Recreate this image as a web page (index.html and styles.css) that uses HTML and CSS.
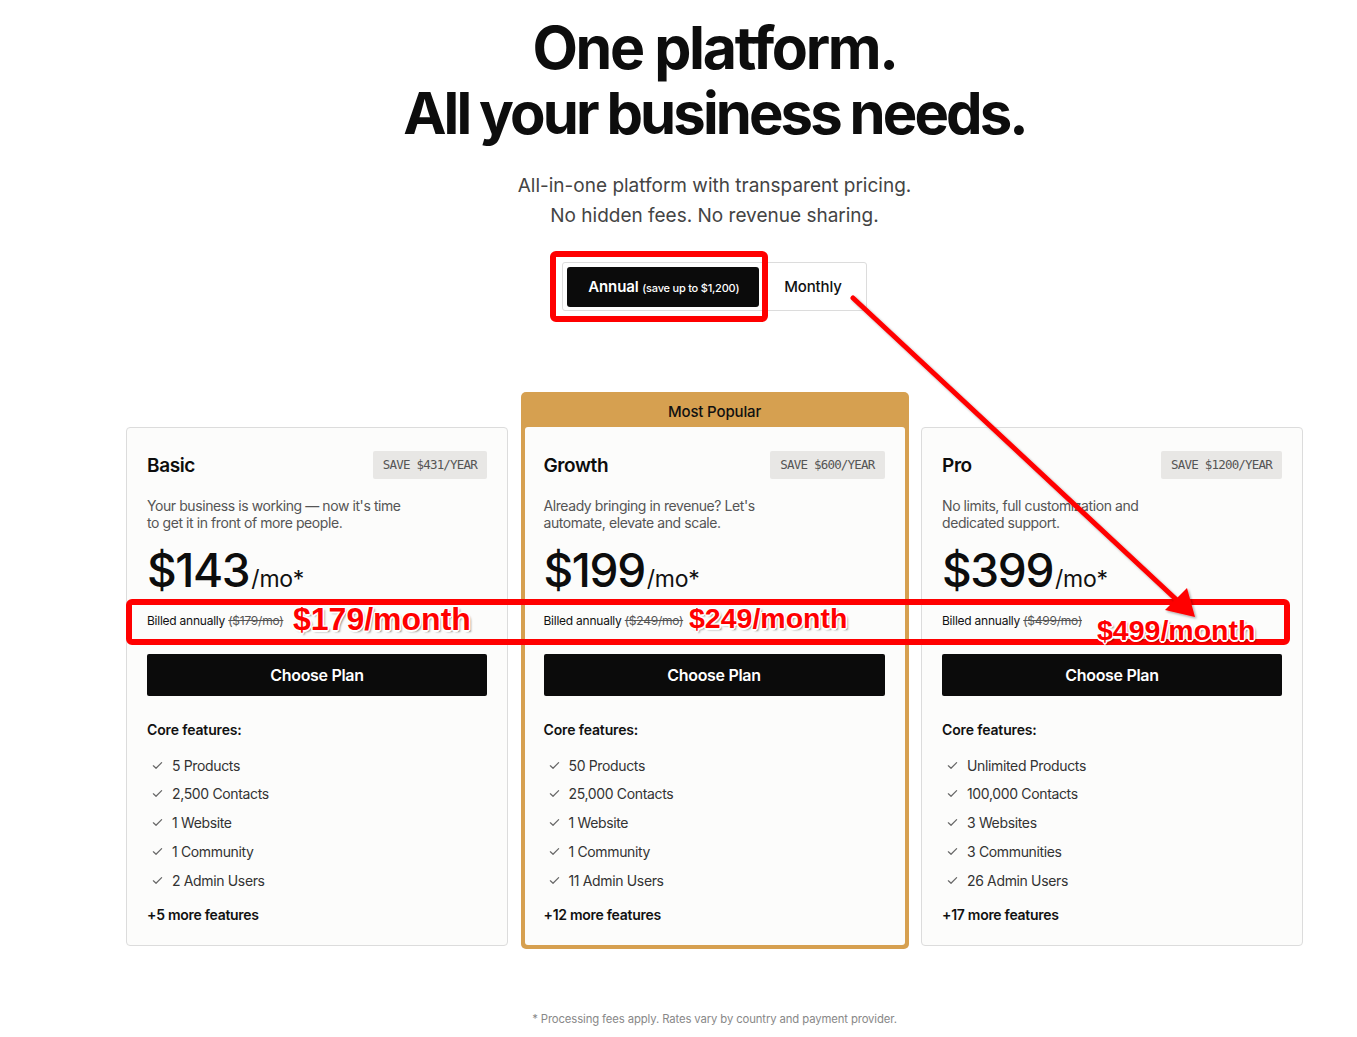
FILE: index.html
```html
<!DOCTYPE html>
<html lang="en">
<head>
<meta charset="utf-8">
<title>Pricing</title>
<link rel="stylesheet" href="styles.css">
</head>
<body>
<div class="page">
  <main class="content">
    <header class="hero">
      <h1 class="hero-title"><span class="line1">One platform.</span><br><span class="line2">All your business needs.</span></h1>
      <p class="hero-sub">All-in-one platform with transparent pricing.<br>No hidden fees. No revenue sharing.</p>
      <div class="toggle">
        <button class="toggle-btn active"><span class="t-main">Annual</span> <span class="t-small">(save up to $1,200)</span></button>
        <button class="toggle-btn">Monthly</button>
      </div>
    </header>

    <section class="plans">
      <article class="card">
        <div class="card-head">
          <h2 class="plan-name">Basic</h2>
          <span class="save">SAVE $431/YEAR</span>
        </div>
        <p class="plan-desc">Your business is working — now it's time to get it in front of more people.</p>
        <div class="price"><span class="amount">$143</span><span class="per">/mo*</span></div>
        <p class="billed">Billed annually <s>($179/mo)</s></p>
        <button class="choose">Choose Plan</button>
        <h3 class="core">Core features:</h3>
        <ul class="features">
          <li><svg class="check" viewBox="0 0 12 12"><path d="M1.5 6.3 L4.4 9 L10.5 2.8"/></svg>5 Products</li>
          <li><svg class="check" viewBox="0 0 12 12"><path d="M1.5 6.3 L4.4 9 L10.5 2.8"/></svg>2,500 Contacts</li>
          <li><svg class="check" viewBox="0 0 12 12"><path d="M1.5 6.3 L4.4 9 L10.5 2.8"/></svg>1 Website</li>
          <li><svg class="check" viewBox="0 0 12 12"><path d="M1.5 6.3 L4.4 9 L10.5 2.8"/></svg>1 Community</li>
          <li><svg class="check" viewBox="0 0 12 12"><path d="M1.5 6.3 L4.4 9 L10.5 2.8"/></svg>2 Admin Users</li>
        </ul>
        <p class="more">+5 more features</p>
      </article>

      <div class="popular">
        <div class="popular-label">Most Popular</div>
        <article class="card card-inner">
          <div class="card-head">
            <h2 class="plan-name">Growth</h2>
            <span class="save">SAVE $600/YEAR</span>
          </div>
          <p class="plan-desc">Already bringing in revenue? Let's automate, elevate and scale.</p>
          <div class="price"><span class="amount">$199</span><span class="per">/mo*</span></div>
          <p class="billed">Billed annually <s>($249/mo)</s></p>
          <button class="choose">Choose Plan</button>
          <h3 class="core">Core features:</h3>
          <ul class="features">
            <li><svg class="check" viewBox="0 0 12 12"><path d="M1.5 6.3 L4.4 9 L10.5 2.8"/></svg>50 Products</li>
            <li><svg class="check" viewBox="0 0 12 12"><path d="M1.5 6.3 L4.4 9 L10.5 2.8"/></svg>25,000 Contacts</li>
            <li><svg class="check" viewBox="0 0 12 12"><path d="M1.5 6.3 L4.4 9 L10.5 2.8"/></svg>1 Website</li>
            <li><svg class="check" viewBox="0 0 12 12"><path d="M1.5 6.3 L4.4 9 L10.5 2.8"/></svg>1 Community</li>
            <li><svg class="check" viewBox="0 0 12 12"><path d="M1.5 6.3 L4.4 9 L10.5 2.8"/></svg>11 Admin Users</li>
          </ul>
          <p class="more">+12 more features</p>
        </article>
      </div>

      <article class="card">
        <div class="card-head">
          <h2 class="plan-name">Pro</h2>
          <span class="save">SAVE $1200/YEAR</span>
        </div>
        <p class="plan-desc">No limits, full customization and dedicated support.</p>
        <div class="price"><span class="amount">$399</span><span class="per">/mo*</span></div>
        <p class="billed">Billed annually <s>($499/mo)</s></p>
        <button class="choose">Choose Plan</button>
        <h3 class="core">Core features:</h3>
        <ul class="features">
          <li><svg class="check" viewBox="0 0 12 12"><path d="M1.5 6.3 L4.4 9 L10.5 2.8"/></svg>Unlimited Products</li>
          <li><svg class="check" viewBox="0 0 12 12"><path d="M1.5 6.3 L4.4 9 L10.5 2.8"/></svg>100,000 Contacts</li>
          <li><svg class="check" viewBox="0 0 12 12"><path d="M1.5 6.3 L4.4 9 L10.5 2.8"/></svg>3 Websites</li>
          <li><svg class="check" viewBox="0 0 12 12"><path d="M1.5 6.3 L4.4 9 L10.5 2.8"/></svg>3 Communities</li>
          <li><svg class="check" viewBox="0 0 12 12"><path d="M1.5 6.3 L4.4 9 L10.5 2.8"/></svg>26 Admin Users</li>
        </ul>
        <p class="more">+17 more features</p>
      </article>
    </section>

    <p class="footnote">* Processing fees apply. Rates vary by country and payment provider.</p>
  </main>

  <div class="annotations">
    <svg class="anno-svg" width="1357" height="1037" viewBox="0 0 1357 1037">
      <defs>
        <filter id="sh" x="-10%" y="-10%" width="120%" height="120%">
          <feDropShadow dx="1.5" dy="1.5" stdDeviation="1" flood-color="#000" flood-opacity="0.35"/>
        </filter>
      </defs>
      <rect x="553" y="254" width="212" height="65" rx="3" fill="none" stroke="#ff0000" stroke-width="6"/>
      <rect x="129" y="602" width="1158" height="40" rx="3" fill="none" stroke="#ff0000" stroke-width="6"/>
      <g filter="url(#sh)">
        <line x1="853" y1="298" x2="1180" y2="603" stroke="#ff0000" stroke-width="5" stroke-linecap="round"/>
        <polygon points="1195,617 1165,610 1187,588" fill="#ff0000"/>
      </g>
    </svg>
    <div class="anno-text t1">$179/month</div>
    <div class="anno-text t2">$249/month</div>
    <div class="anno-text t3">$499/month</div>
  </div>
</div>
</body>
</html>
```

FILE: styles.css
```css
* { box-sizing: border-box; }

html, body {
  margin: 0;
  padding: 0;
  background: #ffffff;
}

body {
  font-family: Inter, "Noto Sans", "Liberation Sans", sans-serif;
  color: #111;
}

.page {
  position: relative;
  width: 1357px;
  height: 1037px;
  overflow: hidden;
}

.content {
  width: 1177px;
  margin-left: 126px;
  display: flex;
  flex-direction: column;
  align-items: center;
}

.hero {
  display: flex;
  flex-direction: column;
  align-items: center;
  padding-top: 15px;
}

.hero-title {
  margin: 0;
  font-size: 59px;
  line-height: 65px;
  font-weight: 700;
  text-align: center;
  color: #0d0d0d;
}

.line1 { letter-spacing: -0.04em; }
.line2 { font-size: 58px; letter-spacing: -0.05em; word-spacing: -1px; }

.hero-sub {
  margin: 25px 0 0;
  font-size: 19px;
  line-height: 30px;
  font-weight: 400;
  text-align: center;
  color: #444;
  letter-spacing: 0;
}

.toggle {
  margin-top: 31px;
  display: flex;
  align-items: center;
  border: 1px solid #dcdcdc;
  border-radius: 3px;
  padding: 4px 0 4px 4px;
  background: #fff;
  height: 49px;
}

.toggle-btn {
  font-family: inherit;
  border: 0;
  background: transparent;
  color: #111;
  font-size: 15px;
  font-weight: 500;
  padding: 0 24px 0 25px;
  height: 40px;
  cursor: pointer;
  letter-spacing: -0.01em;
}

.toggle-btn.active {
  background: #0b0b0b;
  color: #fff;
  border-radius: 3px;
  padding: 0 20px 0 21px;
}

.t-main { font-weight: 600; font-size: 15px; }
.t-small { font-size: 11px; font-weight: 500; letter-spacing: -0.02em; }

.plans {
  margin-top: 81px;
  width: 100%;
  display: grid;
  grid-template-columns: 382px 388px 382px;
  gap: 12.5px;
  align-items: start;
}

.card {
  background: #fcfcfb;
  border: 1px solid #dcdcdc;
  border-radius: 4px;
  padding: 23px 20px 20px 20px;
  margin-top: 35px;
}

.popular {
  background: #d6a050;
  border-radius: 5px;
  padding: 0 4px 4px 4px;
}

.popular-label {
  height: 35px;
  display: flex;
  align-items: center;
  justify-content: center;
  font-size: 15px;
  font-weight: 500;
  color: #111;
  letter-spacing: -0.01em;
  padding-top: 3px;
}

.card-inner {
  margin-top: 0;
  border: 0;
  border-radius: 3px;
  padding-top: 24px;
  padding-bottom: 20px;
  padding-left: 19px;
}

.card-head {
  display: flex;
  justify-content: space-between;
  align-items: center;
  height: 28px;
}

.plan-name {
  margin: 0;
  font-size: 19px;
  font-weight: 600;
  letter-spacing: -0.02em;
  color: #0d0d0d;
}

.save {
  background: #e8e7e5;
  color: #555;
  font-family: "DejaVu Sans Mono", "Liberation Mono", monospace;
  font-size: 12.5px;
  letter-spacing: -0.8px;
  height: 28px;
  line-height: 28px;
  padding: 0 10px;
  border-radius: 2px;
}

.plan-desc {
  margin: 18px 0 0;
  font-size: 14px;
  line-height: 17px;
  color: #555;
  max-width: 257px;
  letter-spacing: -0.03em;
}

.price {
  margin-top: 14px;
  display: flex;
  align-items: baseline;
  height: 50px;
  line-height: 50px;
}

.amount {
  font-size: 46px;
  font-weight: 500;
  letter-spacing: -0.03em;
  color: #0d0d0d;
}

.per {
  font-size: 23px;
  font-weight: 400;
  color: #111;
  letter-spacing: -0.01em;
  margin-left: 2px;
}

.billed {
  margin: 18px 0 0;
  font-size: 12px;
  line-height: 16px;
  color: #111;
  letter-spacing: -0.02em;
}

.billed s {
  color: #555;
}

.choose {
  display: block;
  width: 100%;
  margin-top: 25px;
  height: 42px;
  border: 0;
  border-radius: 2px;
  background: #0b0b0b;
  color: #fff;
  font-family: inherit;
  font-size: 16px;
  font-weight: 600;
  letter-spacing: -0.02em;
  cursor: pointer;
}

.core {
  margin: 24px 0 0;
  font-size: 14px;
  line-height: 20px;
  font-weight: 600;
  color: #111;
  letter-spacing: -0.01em;
}

.features {
  list-style: none;
  margin: 15px 0 0;
  padding: 0;
  display: flex;
  flex-direction: column;
  gap: 8.75px;
}

.features li {
  display: flex;
  align-items: center;
  height: 20px;
  font-size: 14px;
  color: #333;
  letter-spacing: -0.025em;
}

.check {
  width: 11px;
  height: 11px;
  margin-left: 5px;
  margin-right: 9px;
  fill: none;
  stroke: #666;
  stroke-width: 1.3;
  stroke-linecap: round;
  stroke-linejoin: round;
}

.more {
  margin: 15px 0 0;
  font-size: 14px;
  line-height: 20px;
  font-weight: 600;
  color: #111;
  letter-spacing: -0.02em;
}

.footnote {
  margin: 63px 0 0;
  font-size: 11.3px;
  color: #888;
  letter-spacing: -0.01em;
}

/* Annotation overlay */
.annotations {
  position: absolute;
  inset: 0;
  pointer-events: none;
}

.anno-svg {
  position: absolute;
  left: 0;
  top: 0;
}

.anno-text {
  position: absolute;
  font-family: "Liberation Sans", Arial, sans-serif;
  font-weight: 700;
  color: #ff0000;
  text-shadow:
    -1px -1px 0 #fff, 1px -1px 0 #fff, -1px 1px 0 #fff, 1px 1px 0 #fff,
    0 -1.5px 0 #fff, 0 1.5px 0 #fff, -1.5px 0 0 #fff, 1.5px 0 0 #fff,
    2px 2px 2px rgba(0,0,0,0.45);
}

.t1 { left: 293px; top: 603px; font-size: 32px; line-height: 32px; }
.t2 { left: 689px; top: 604px; font-size: 28.5px; line-height: 28.5px; }
.t3 { left: 1097px; top: 616px; font-size: 28.5px; line-height: 28.5px; }
```
